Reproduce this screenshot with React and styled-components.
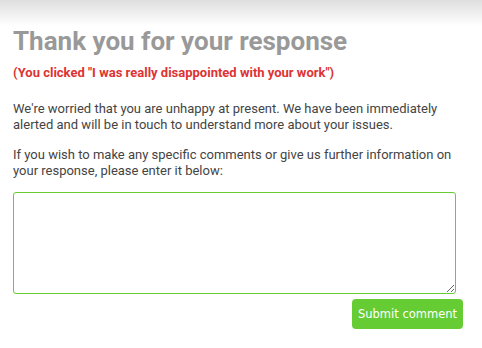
import React from "react";
import styled, { createGlobalStyle } from "styled-components";

const Global = createGlobalStyle`
  html, body { margin: 0; padding: 0; background: #fff; }
  body { font-family: Roboto, "Liberation Sans", sans-serif; }
`;

const Page = styled.div`
  width: 482px;
  min-height: 348px;
  background: linear-gradient(to bottom, #dedede 0px, #fff 26px);
  padding: 25px 19px 0 13px;
  box-sizing: border-box;
`;

const Title = styled.h1`
  margin: 0;
  font-size: 26px;
  line-height: 32px;
  font-weight: 700;
  color: #999;
`;

const Clicked = styled.p`
  margin: 8px 0 0;
  font-size: 13px;
  line-height: 16px;
  font-weight: 700;
  color: #dd3333;
`;

const Para = styled.p`
  margin: ${(p) => p.top || 15}px 0 0;
  font-size: 13px;
  line-height: 15.5px;
  color: #444;
`;

const Form = styled.form`
  display: flex;
  flex-direction: column;
  align-items: flex-end;
  margin-top: 14px;
`;

const Box = styled.textarea`
  width: 443px;
  height: 102px;
  box-sizing: border-box;
  align-self: flex-start;
  border: 1px solid #66cc33;
  border-radius: 3px;
  outline: none;
  resize: vertical;
  display: block;
`;

const Button = styled.button`
  margin-top: 5px;
  width: 111px;
  height: 30px;
  border: none;
  border-radius: 4px;
  background: #66cc33;
  color: #fff;
  font-family: "DejaVu Sans", Verdana, sans-serif;
  font-size: 11.5px;
  padding: 0;
  cursor: pointer;
`;

export default function App() {
  return (
    <>
      <Global />
      <Page>
        <Title>Thank you for your response</Title>
        <Clicked>(You clicked "I was really disappointed with your work")</Clicked>
        <Para top={20}>
          We're worried that you are unhappy at present. We have been immediately
          alerted and will be in touch to understand more about your issues.
        </Para>
        <Para>
          If you wish to make any specific comments or give us further information on
          your response, please enter it below:
        </Para>
        <Form onSubmit={(e) => e.preventDefault()}>
          <Box />
          <Button type="submit">Submit comment</Button>
        </Form>
      </Page>
    </>
  );
}
